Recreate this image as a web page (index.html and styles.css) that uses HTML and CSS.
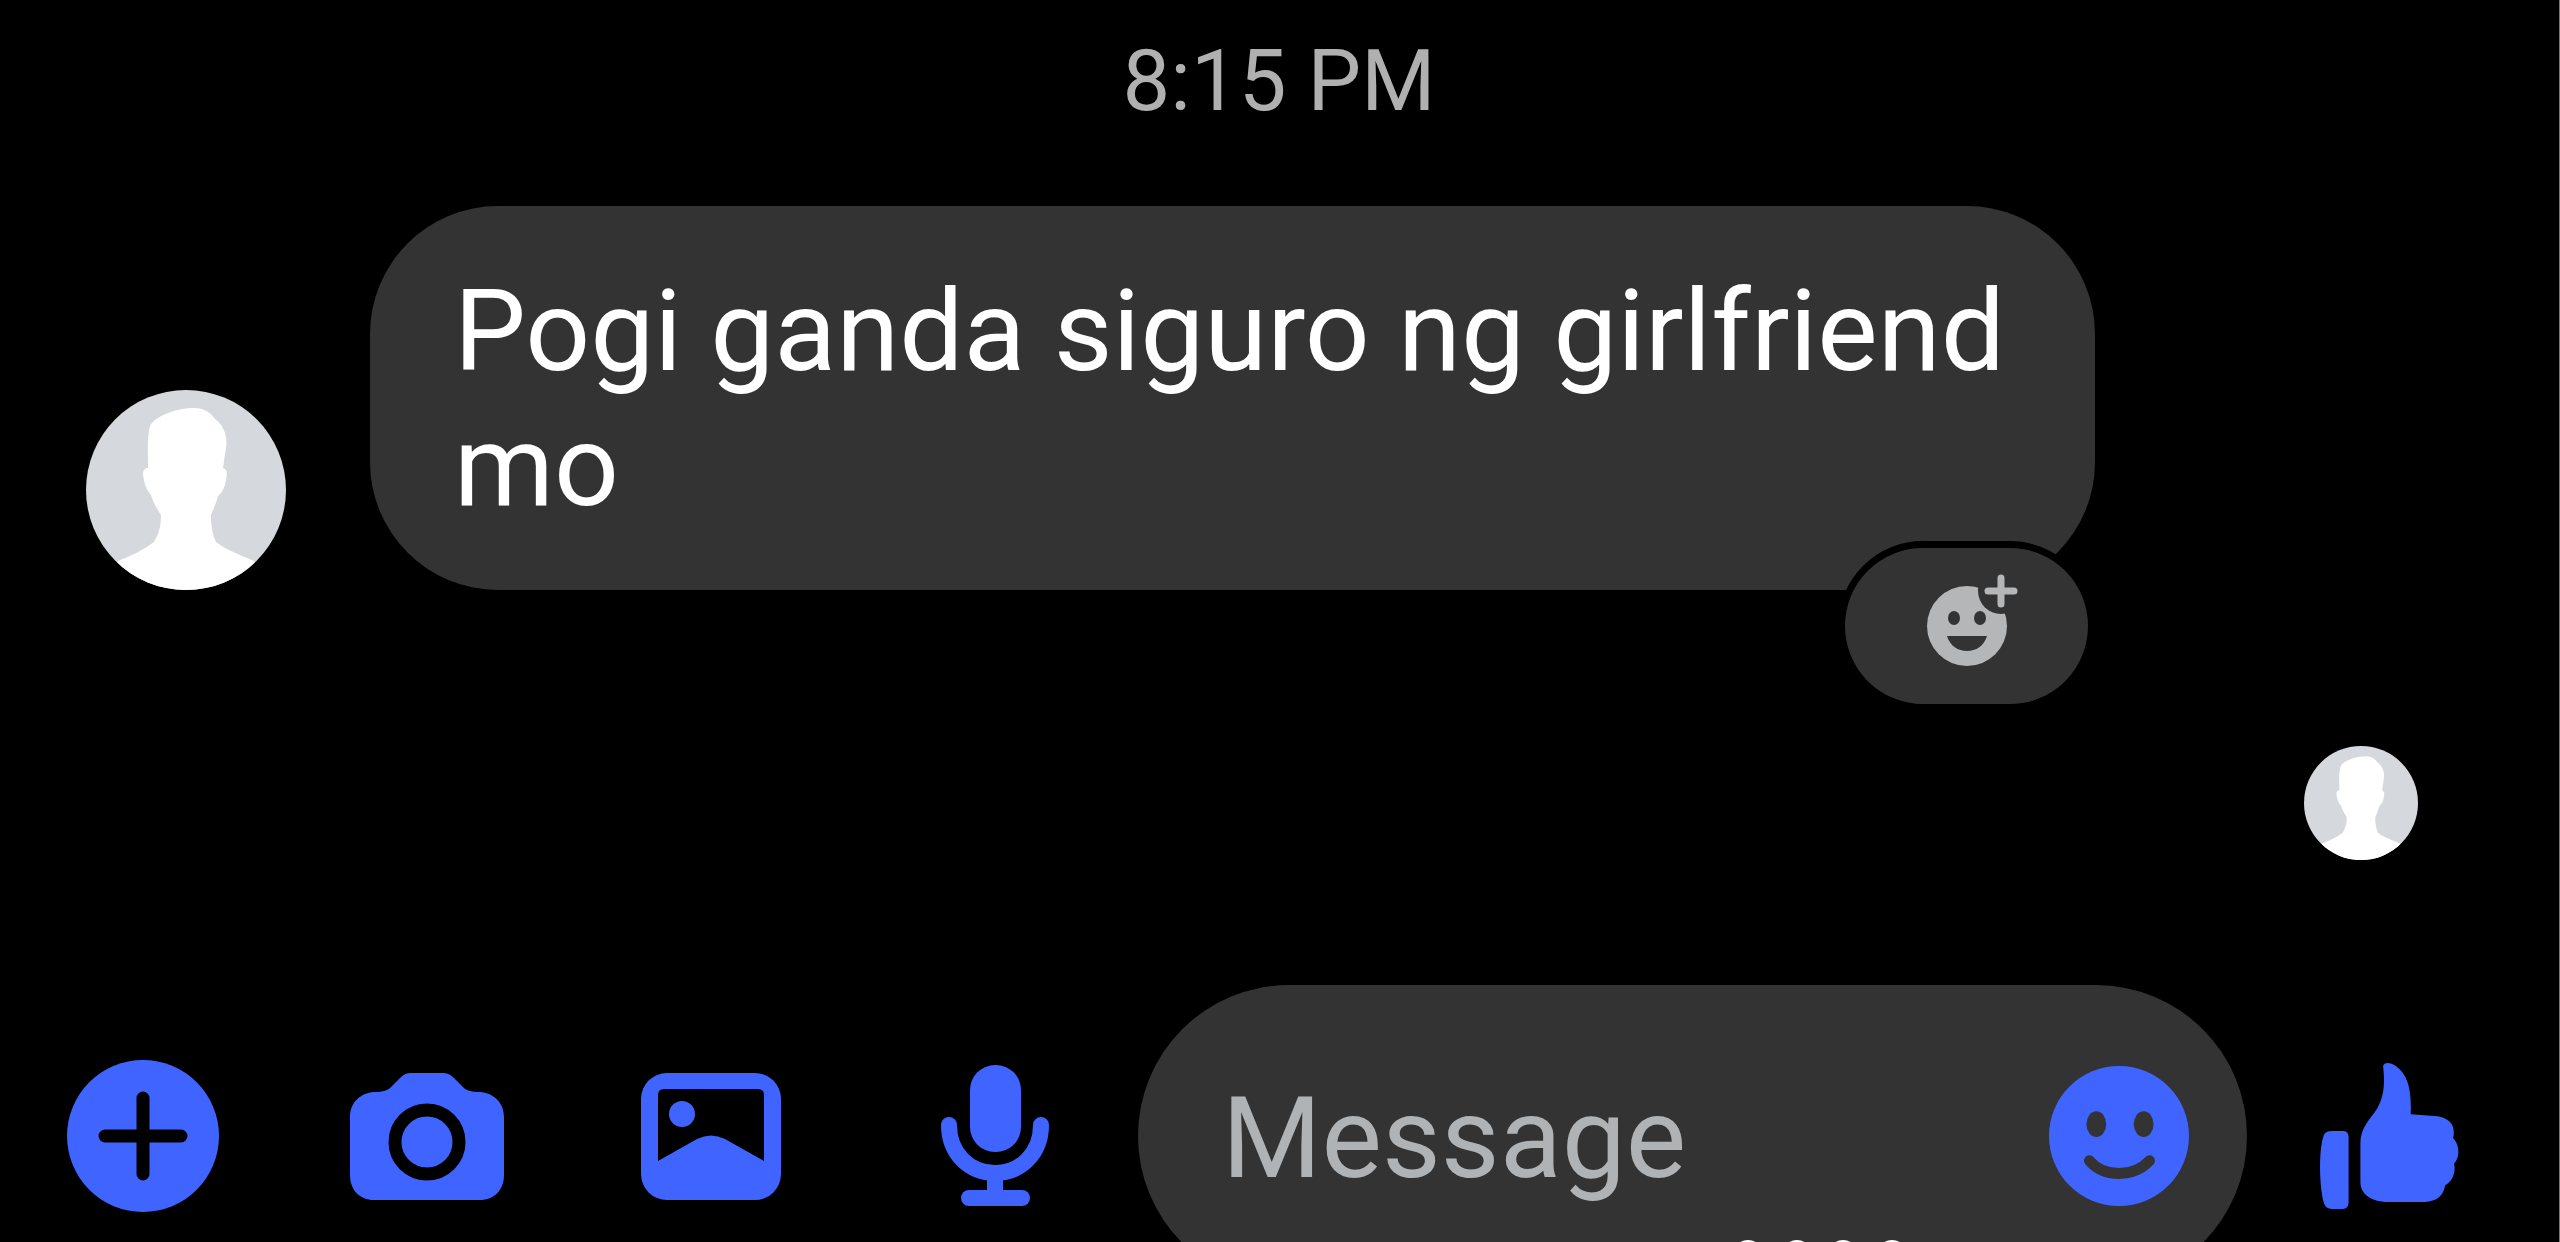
FILE: index.html
```html
<!DOCTYPE html>
<html lang="tl">
<head>
  <meta charset="UTF-8">
  <meta name="viewport" content="width=device-width, initial-scale=1.0">
  <title>Messenger</title>
  <link rel="stylesheet" href="styles.css">
</head>
<body>

  <!-- Avatar shape, used twice -->
  <svg class="defs" aria-hidden="true">
    <symbol id="avatar" viewBox="0 0 200 200">
      <clipPath id="round"><circle cx="100" cy="100" r="100"/></clipPath>
      <g clip-path="url(#round)">
        <rect width="200" height="200" fill="#d5d8dc"/>
        <path fill="#fff" d="M64 36C70 25 92 18 108 18C118 18 124 22 129 29C138 35 142 48 140 58L137 78C142 80 141 84 140 90C138 101 135 103 132 106C130 114 127 120 125 125C125 138 127 145 130 152C140 160 155 165 168 171L180 200H20L32 171C45 166 57 160 68 152C72 145 75 138 75 125C71 119 67 112 65 105C61 101 58 94 57 84C57 79 60 78 62 78C62 62 61 46 64 36Z"/>
      </g>
    </symbol>
  </svg>

  <main class="chat">
    <time class="time">8:15 PM</time>

    <div class="row">
      <svg class="avatar" role="img" aria-label="Sender"><use href="#avatar"/></svg>
      <div class="bubble">
        <p>Pogi ganda siguro ng girlfriend mo</p>
        <button class="react" aria-label="Add reaction">
          <svg viewBox="-12 -2 106 106">
            <circle cx="41" cy="51" r="40" fill="#b4b6b8"/>
            <circle cx="75" cy="16" r="23" fill="#333"/>
            <path d="M75 3V29M62 16H88" stroke="#b4b6b8" stroke-width="7" stroke-linecap="round"/>
            <ellipse cx="28" cy="43" rx="6" ry="7" fill="#333"/>
            <ellipse cx="54" cy="43" rx="6" ry="7" fill="#333"/>
            <path d="M21 61H61C58 71 50 76 41 76S24 71 21 61Z" fill="#333"/>
          </svg>
        </button>
      </div>
    </div>

    <svg class="seen" role="img" aria-label="Seen"><use href="#avatar"/></svg>
  </main>

  <form class="composer">
    <div class="tools">
      <button type="button" aria-label="More">
        <svg width="152" height="152" viewBox="0 0 152 152">
          <circle cx="76" cy="76" r="76" fill="#4064ff"/>
          <path d="M76 38V114M38 76H114" stroke="#000" stroke-width="13" stroke-linecap="round"/>
        </svg>
      </button>
      <button type="button" aria-label="Camera">
        <svg width="154" height="152" viewBox="0 0 154 152">
          <path fill="#4064ff" d="M24 32C33 32 38 31 43 25L50 18C54 14 57 13 62 13H92C97 13 100 14 104 18L111 25C116 31 121 32 130 32C144 33 154 43 154 57V115C154 130 144 140 130 140H24C10 140 0 130 0 115V57C0 43 10 33 24 32Z"/>
          <circle cx="77" cy="82" r="32" fill="none" stroke="#000" stroke-width="13"/>
        </svg>
      </button>
      <button type="button" aria-label="Gallery">
        <svg width="140" height="152" viewBox="0 0 140 152">
          <rect y="13" width="140" height="127" rx="26" fill="#4064ff"/>
          <path d="M23 29H117Q123 29 123 35V101L84 79Q70 72 56 79L17 101V35Q17 29 23 29Z" fill="#000"/>
          <circle cx="41" cy="54" r="13" fill="#4064ff"/>
        </svg>
      </button>
      <button type="button" aria-label="Voice">
        <svg width="108" height="152" viewBox="0 0 108 152">
          <rect x="29" y="5" width="51" height="87" rx="25" fill="#4064ff"/>
          <path d="M8 65C8 94 29 113 54 113S100 94 100 65M54 113V135" fill="none" stroke="#4064ff" stroke-width="16" stroke-linecap="round"/>
          <path d="M28 138H81" stroke="#4064ff" stroke-width="16" stroke-linecap="round"/>
        </svg>
      </button>
    </div>

    <div class="field">
      <input type="text" placeholder="Message" aria-label="Message">
      <button type="button" aria-label="Emoji">
        <svg width="140" height="142" viewBox="0 0 142 142">
          <circle cx="71" cy="71" r="71" fill="#4064ff"/>
          <ellipse cx="48" cy="59" rx="10" ry="13" fill="#333"/>
          <ellipse cx="96" cy="59" rx="10" ry="13" fill="#333"/>
          <path d="M41 96Q52 109 71 109T102 96" fill="none" stroke="#333" stroke-width="11" stroke-linecap="round"/>
        </svg>
      </button>
      <!-- Dots peeking over the bottom edge -->
      <svg class="dots" width="180" height="30" viewBox="0 0 180 30" fill="#fff" aria-hidden="true">
        <circle cx="17" cy="15" r="15"/>
        <circle cx="66" cy="15" r="15"/>
        <circle cx="112" cy="15" r="15"/>
        <circle cx="161" cy="15" r="15"/>
      </svg>
    </div>

    <button type="button" aria-label="Like">
      <svg width="140" height="148" viewBox="0 0 142 150">
        <path fill="#4064ff" d="M8 71Q9 70 14 70H24Q30 70 30 76V142Q30 149 24 149H13Q7 149 5 143C0 124 0 91 4 77Q5 72 8 71Z"/>
        <path fill="#4064ff" d="M65 4C66 0 72 0 78 4C90 13 94 27 93 53L120 55C133 57 139 65 136 77C143 84 143 97 137 103C139 113 135 121 128 125C126 136 120 141 107 142H70C53 142 42 134 42 122V82C42 66 52 58 59 47C66 35 67 22 65 4Z"/>
      </svg>
    </button>
  </form>

</body>
</html>
```
FILE: styles.css
```css
* {
  box-sizing: border-box;
}

body {
  margin: 0;
  height: 100vh;
  overflow: hidden;
  border-right: 1px solid #777;
  background: #000;
  color: #fff;
  font-family: Roboto, sans-serif;
}

.defs {
  position: absolute;
  width: 0;
  height: 0;
}

button {
  flex: none;
  padding: 0;
  border: none;
  background: none;
  cursor: pointer;
}

button svg {
  display: block;
}

.chat {
  display: flex;
  flex-direction: column;
  padding: 31px 141px 0 86px;
}

.time {
  align-self: center;
  margin-left: 54px;
  font-size: 85px;
  line-height: 100px;
  color: #b0b0b0;
}

.row {
  display: flex;
  align-items: flex-end;
  gap: 84px;
  margin-top: 75px;
}

.avatar {
  flex: none;
  width: 200px;
  height: 200px;
}

.bubble {
  position: relative;
  max-width: 1725px;
  padding: 58px 84px 56px;
  border-radius: 128px;
  background: #333;
  font-size: 114px;
  line-height: 135px;
}

.bubble p {
  margin: 0;
}

/* Reaction pill over the bubble's corner */
.react {
  position: absolute;
  right: 0;
  bottom: -121px;
  display: flex;
  align-items: center;
  justify-content: center;
  width: 257px;
  height: 170px;
  border: 7px solid #000;
  border-radius: 85px;
  background: #333;
}

.react svg {
  width: 106px;
  height: 106px;
}

.seen {
  align-self: flex-end;
  width: 114px;
  height: 114px;
  margin-top: 156px;
}

.composer {
  display: flex;
  align-items: center;
  margin-top: 125px;
  padding: 0 100px 0 66px;
}

.tools {
  display: flex;
  gap: 130px;
  margin-right: 66px;
}

.tools button {
  display: flex;
  justify-content: center;
  width: 154px;
}

.field {
  position: relative;
  display: flex;
  flex: 1;
  align-items: center;
  min-width: 0;
  height: 302px;
  margin-right: 72px;
  padding: 0 58px 0 84px;
  border-radius: 151px;
  background: #333;
}

.field input {
  flex: 1;
  min-width: 0;
  padding: 4px 0 0;
  border: none;
  outline: none;
  background: none;
  color: #fff;
  font: 114px Roboto, sans-serif;
}

.field input::placeholder {
  color: #b0b3b5;
  opacity: 1;
}

.dots {
  position: absolute;
  right: 336px;
  bottom: 17px;
}
```
